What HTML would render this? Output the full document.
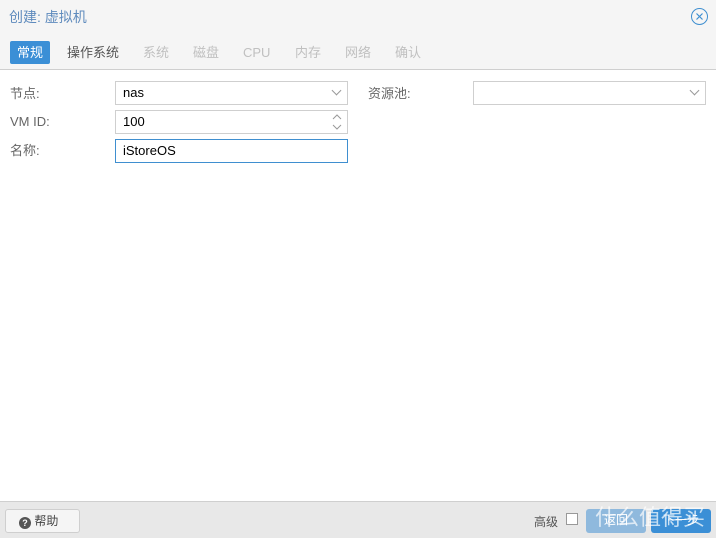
<!DOCTYPE html>
<html><head><meta charset="utf-8"><style>
*{box-sizing:border-box;margin:0;padding:0}
body{width:716px;height:538px;background:#fff;font-family:"Liberation Sans","Noto Sans CJK SC",sans-serif;font-size:13px;position:relative;overflow:hidden;color:#333}
.hdr{position:absolute;left:0;top:0;width:716px;height:70px;background:#f5f5f5;border-bottom:1px solid #cfcfcf}
.title{position:absolute;left:9px;top:8px;font-size:14px;line-height:18px;color:#5f8bbd}
.close{position:absolute;left:691px;top:8px;width:17px;height:17px;border:1.3px solid #3f8fd0;border-radius:50%}
.tab{position:absolute;top:41px;height:23px;line-height:23px;font-size:13px;color:#c0c0c0}
.lbl{position:absolute;left:10px;color:#666;line-height:16px}
.in{position:absolute;height:24px;border:1px solid #cfcfcf;background:#fff;padding-left:7px;line-height:22px;color:#000}
.chev{position:absolute;right:7px;top:5px;width:7px;height:7px;border-right:1px solid #999;border-bottom:1px solid #999;transform:rotate(45deg)}
.ftr{position:absolute;left:0;top:501px;width:716px;height:37px;background:#e8e8e8;border-top:1px solid #cfcfcf}
.btn{position:absolute;top:7px;height:24px;border-radius:3px;line-height:22px;font-size:12px}
</style></head><body>
<div class="hdr">
<div class="title">创建: 虚拟机</div>
<div class="close"><svg width="15" height="15" viewBox="0 0 15 15" style="position:absolute;left:0;top:0"><path d="M4.5 4.5L10.5 10.5M10.5 4.5L4.5 10.5" stroke="#3f8fd0" stroke-width="1.2"/></svg></div>
<div class="tab" style="left:10px;width:40px;background:#3b8fd6;color:#fff;border-radius:2px;text-align:center">常规</div>
<div class="tab" style="left:67px;color:#555">操作系统</div>
<div class="tab" style="left:143px">系统</div>
<div class="tab" style="left:193px">磁盘</div>
<div class="tab" style="left:243px">CPU</div>
<div class="tab" style="left:295px">内存</div>
<div class="tab" style="left:345px">网络</div>
<div class="tab" style="left:395px">确认</div>
</div>
<div class="lbl" style="top:86px">节点:</div>
<div class="in" style="left:115px;top:81px;width:233px">nas<div class="chev"></div></div>
<div class="lbl" style="top:114px">VM ID:</div>
<div class="in" style="left:115px;top:110px;width:233px">100
<svg width="10" height="18" style="position:absolute;right:5px;top:2px"><path d="M1 6L5 2L9 6M1 12L5 16L9 12" stroke="#999" fill="none"/></svg></div>
<div class="lbl" style="top:143px">名称:</div>
<div class="in" style="left:115px;top:139px;width:233px;border-color:#3f8fd0">iStoreOS</div>
<div class="lbl" style="left:368px;top:86px">资源池:</div>
<div class="in" style="left:473px;top:81px;width:233px"><div class="chev"></div></div>
<div class="ftr">
<div class="btn" style="left:5px;width:75px;background:#f5f5f5;border:1px solid #cfcfcf;padding-left:13px;color:#444"><span style="display:inline-block;width:12px;height:12px;border-radius:50%;background:#555;color:#fff;font-size:9px;line-height:12px;text-align:center;font-weight:bold;vertical-align:-1px">?</span> 帮助</div>
<div style="position:absolute;left:534px;top:11px;color:#555;font-size:12px">高级</div>
<div style="position:absolute;left:566px;top:11px;width:12px;height:12px;border:1px solid #999;background:#fff"></div>
<div class="btn" style="left:586px;width:60px;background:#8fb9dd;color:#fff;text-align:center">返回</div>
<div class="btn" style="left:651px;width:60px;background:#3b8fd6;color:#fff;text-align:center">下一步</div>
<div style="position:absolute;left:595px;top:-2px;color:rgba(255,255,255,.7);font-size:22px">什么值得买</div>
</div>
</body></html>
